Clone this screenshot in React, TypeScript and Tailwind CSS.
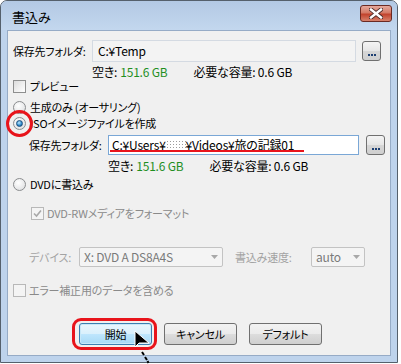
import React from 'react';

const font = "[font-family:'Noto_Sans_CJK_JP','Noto_Sans',sans-serif] [font-feature-settings:'palt']";

function Radio({ checked }: { checked?: boolean }) {
  return (
    <span className="relative w-[13px] h-[13px] rounded-full border border-[#8a8c8e] bg-[radial-gradient(circle_at_40%_35%,#ffffff,#d9dadc)] flex items-center justify-center shrink-0">
      {checked && (
        <span className="w-[7px] h-[7px] rounded-full border border-[#1b4f7f] bg-[radial-gradient(circle_at_40%_35%,#bfe9ff,#2a86c8_60%,#0e4e86)]" />
      )}
    </span>
  );
}

function Check({ checked, disabled }: { checked?: boolean; disabled?: boolean }) {
  return (
    <span
      className={`w-[13px] h-[13px] border flex items-center justify-center shrink-0 ${
        disabled ? 'border-[#b8b8b8] bg-[#f4f4f4]' : 'border-[#8e8f8f] bg-[linear-gradient(135deg,#dcdcdc,#ffffff)]'
      }`}
    >
      {checked && (
        <svg width="9" height="9" viewBox="0 0 9 9">
          <path d="M1 4.5 L3.5 7 L8 1.5" fill="none" stroke={disabled ? '#a8a8a8' : '#1c3f6e'} strokeWidth="1.6" />
        </svg>
      )}
    </span>
  );
}

function Browse() {
  return (
    <button className="w-[19px] h-[20px] rounded-[3px] border border-[#707070] bg-[linear-gradient(#f4f4f4,#e6e6e6_50%,#d6d6d6_51%,#cfcfcf)] flex items-end justify-center pb-[4px] gap-[1px] shrink-0">
      <span className="w-[2px] h-[2px] bg-[#1d3f73]" />
      <span className="w-[2px] h-[2px] bg-[#1d3f73]" />
      <span className="w-[2px] h-[2px] bg-[#1d3f73]" />
    </button>
  );
}

function Select({ w, text }: { w: string; text: string }) {
  return (
    <div className={`${w} h-[20px] border border-[#c3c3c3] rounded-[2px] bg-[#f4f4f4] flex items-center pl-[4px] pr-[4px] text-[#7a7a7a] text-[12px] shrink-0`}>
      <span className="flex-1 whitespace-nowrap">{text}</span>
      <svg width="7" height="4" viewBox="0 0 7 4">
        <path d="M0 0 L7 0 L3.5 4 Z" fill="#a8a8a8" />
      </svg>
    </div>
  );
}

function Btn({ children, primary }: { children: React.ReactNode; primary?: boolean }) {
  return (
    <button
      className={`w-[73px] h-[22px] rounded-[3px] border flex items-center justify-center text-black ${
        primary
          ? 'border-[#3c7fb1] bg-[linear-gradient(#eaf6fd,#d9f0fc_50%,#bee6fd_51%,#a7d9f5)] shadow-[inset_0_0_0_1px_#c8e8f8]'
          : 'border-[#707070] bg-[linear-gradient(#f2f2f2,#ebebeb_50%,#dddddd_51%,#cfcfcf)]'
      }`}
    >
      {children}
    </button>
  );
}

export default function App() {
  return (
    <div className={`w-[401px] h-[364px] bg-white ${font} text-[11px] tracking-[-0.2px] leading-none`}>
      <div className="w-[398px] h-[363px] rounded-t-[7px] border border-[#55606c] bg-[#bed3ec] flex flex-col">
        {/* Title bar */}
        <div className="h-[29px] flex items-center pl-[11px] pr-[5px] rounded-t-[6px] bg-[linear-gradient(#b3c9e4,#c3d7ee)]">
          <span className="text-[13px] tracking-normal text-black flex-1 pt-[2px]">書込み</span>
          <div className="w-[32px] h-[17px] mt-[-4px] rounded-[3px] border border-[#6b2a22] bg-[linear-gradient(#e5a99c,#d47a66_45%,#c2432d_55%,#d7826c)] flex items-center justify-center">
            <svg width="14" height="11" viewBox="0 0 14 11">
              <path d="M2 1.5 L12 9.5 M12 1.5 L2 9.5" stroke="#4a2a28" strokeWidth="4.2" strokeLinecap="square" />
              <path d="M2 1.5 L12 9.5 M12 1.5 L2 9.5" stroke="#ffffff" strokeWidth="2.4" strokeLinecap="square" />
            </svg>
          </div>
        </div>

        {/* Client area */}
        <div className="flex-1 mx-[6px] mb-[6px] border border-[#96abc6] bg-[#f0f0f0] flex flex-col text-black whitespace-nowrap">
          {/* output folder */}
          <div className="mt-[9px] h-[22px] flex items-center pl-[5px]">
            <span className="w-[79px] shrink-0">保存先フォルダ:</span>
            <div className="w-[264px] h-[22px] border border-[#d4dae2] bg-[#f3f3f3] flex items-center pl-[5px] text-[12px]">C:¥Temp</div>
            <div className="ml-[6px]">
              <Browse />
            </div>
          </div>
          <div className="mt-[3px] h-[14px] flex items-center pl-[84px] text-[12px]">
            <span>空き: </span>
            <span className="text-[#1f8f1f] ml-[3px]">151.6 GB</span>
            <span className="ml-[26px]">必要な容量: 0.6 GB</span>
          </div>

          <div className="h-[14px] flex items-center pl-[5px] gap-[4px]">
            <Check />
            <span>プレビュー</span>
          </div>

          <div className="mt-[7px] h-[14px] flex items-center pl-[5px] gap-[4px]">
            <Radio />
            <span>生成のみ (オーサリング)</span>
          </div>
          <div className="mt-[2px] h-[14px] flex items-center pl-[5px] gap-[4px]">
            <span className="relative flex">
              <Radio checked />
              <span className="absolute -left-[7px] -top-[7px] w-[27px] h-[27px] rounded-full border-[3px] border-[#e8141b]" />
            </span>
            <span>ISOイメージファイルを作成</span>
          </div>

          <div className="mt-[5px] h-[20px] flex items-center pl-[21px]">
            <span className="w-[79px] shrink-0">保存先フォルダ:</span>
            <div className="relative w-[251px] h-[20px] border border-[#7aa7d6] bg-white flex items-center pl-[3px] text-[12px]">
              <span>C:¥Users¥</span>
              <span className="inline-block w-[20px] h-[11px] bg-[radial-gradient(#9c9c9c_0.7px,transparent_0.9px)] bg-[length:3px_3px]" />
              <span>¥Videos¥旅の記録01</span>
              <span className="absolute left-[1px] bottom-[2px] w-[194px] h-[2px] bg-[#e8141b]" />
            </div>
            <div className="ml-[7px]">
              <Browse />
            </div>
          </div>
          <div className="mt-[4px] h-[14px] flex items-center pl-[100px] text-[12px]">
            <span>空き: </span>
            <span className="text-[#1f8f1f] ml-[3px]">151.6 GB</span>
            <span className="ml-[26px]">必要な容量: 0.6 GB</span>
          </div>

          <div className="mt-[4px] h-[14px] flex items-center pl-[5px] gap-[4px]">
            <Radio />
            <span>DVDに書込み</span>
          </div>

          <div className="mt-[15px] h-[14px] flex items-center pl-[23px] gap-[3px] text-[#8a8a8a]">
            <Check checked disabled />
            <span>DVD-RWメディアをフォーマット</span>
          </div>

          <div className="mt-[27px] h-[20px] flex items-center pl-[21px] text-[#a3a3a3]">
            <span className="w-[50px] shrink-0">デバイス:</span>
            <Select w="w-[144px]" text="X: DVD A DS8A4S" />
            <span className="ml-[12px] w-[76px] shrink-0">書込み速度:</span>
            <Select w="w-[54px]" text="auto" />
          </div>

          <div className="mt-[16px] h-[14px] flex items-center pl-[5px] gap-[3px] text-[#8a8a8a]">
            <Check disabled />
            <span>エラー補正用のデータを含める</span>
          </div>

          <div className="mt-[26px] h-[22px] flex items-center pl-[71px] gap-[12px]">
            <span className="relative flex">
              <Btn primary>開始</Btn>
              <span className="absolute -left-[7px] -right-[5px] -top-[5px] -bottom-[5px] rounded-[9px] border-[3px] border-[#e8141b]" />
              <svg className="absolute left-[55px] top-[7px]" width="18" height="34" viewBox="0 0 18 34">
                <path d="M1 1 L1 17 L5 13 L15 13 Z" fill="#000" stroke="#fff" strokeWidth="1" />
                <path d="M8 22 L10 25 M11 27 L13 30 M13.5 31 L14.5 33" stroke="#000" strokeWidth="2" />
              </svg>
            </span>
            <Btn>キャンセル</Btn>
            <Btn>デフォルト</Btn>
          </div>
        </div>
      </div>
    </div>
  );
}
